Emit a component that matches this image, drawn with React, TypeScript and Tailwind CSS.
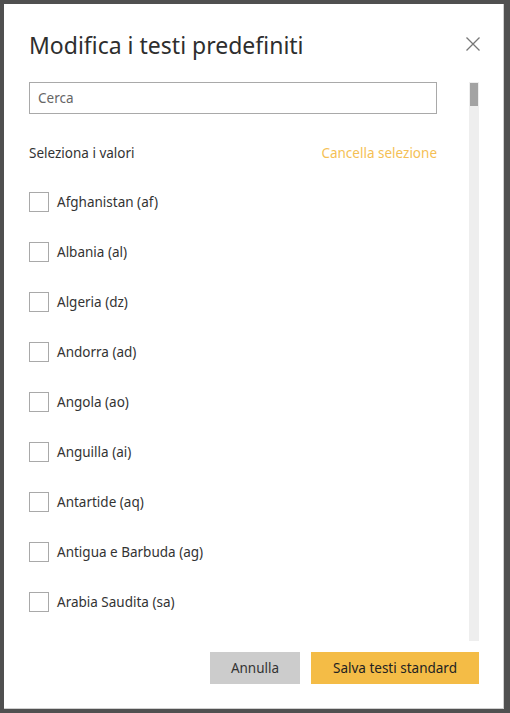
import { useState } from 'react';

const countries = [
  'Afghanistan (af)',
  'Albania (al)',
  'Algeria (dz)',
  'Andorra (ad)',
  'Angola (ao)',
  'Anguilla (ai)',
  'Antartide (aq)',
  'Antigua e Barbuda (ag)',
  'Arabia Saudita (sa)',
];

const CloseIcon = () => (
  <svg width="16" height="16" viewBox="0 0 16 16" fill="none" stroke="#777" strokeWidth="1.3">
    <path d="M1.5 1.5 L14.5 14.5 M14.5 1.5 L1.5 14.5" />
  </svg>
);

export default function App() {
  const [selected, setSelected] = useState<string[]>([]);

  const toggle = (c: string) =>
    setSelected((s) => (s.includes(c) ? s.filter((x) => x !== c) : [...s, c]));

  return (
    <div
      className="w-[510px] h-[713px] bg-[#505050] pl-[4px] pt-[4px] overflow-hidden"
      style={{ fontFamily: '"Noto Sans", "Open Sans", sans-serif' }}
    >
      <div className="w-[500px] h-[705px] bg-white border-r border-b border-[#cfcfcf] flex flex-col pl-[25px] pr-[24px]">
        <div className="flex items-center justify-between pt-[25px] h-[57px]">
          <h1 className="text-[23px] leading-[32px] text-[#2e2e2e]">Modifica i testi predefiniti</h1>
          <button className="mr-[-2px] mt-[-2px]">
            <CloseIcon />
          </button>
        </div>

        <div className="flex mt-[21px] h-[559px] gap-[32px]">
          <div className="w-[408px] overflow-hidden">
            <input
              placeholder="Cerca"
              className="w-full h-[32px] border border-[#a9a9a9] px-[8px] text-[13.5px] text-[#333] placeholder:text-[#666] outline-none"
            />
            <div className="flex items-center justify-between mt-[29px] h-[20px] text-[13.5px]">
              <span className="text-[#333]">Seleziona i valori</span>
              <button className="text-[#f5bf55]" onClick={() => setSelected([])}>
                Cancella selezione
              </button>
            </div>
            <div className="flex flex-col gap-[30px] mt-[29px]">
              {countries.map((c) => (
                <label key={c} className="flex items-center gap-[8px] h-[20px] text-[13.5px] text-[#333]">
                  <span
                    onClick={() => toggle(c)}
                    className="w-[20px] h-[20px] border border-[#a9a9a9] bg-white flex items-center justify-center shrink-0"
                  >
                    {selected.includes(c) && (
                      <svg width="12" height="12" viewBox="0 0 12 12" fill="none" stroke="#333" strokeWidth="1.6">
                        <path d="M2 6.5 L5 9 L10 3" />
                      </svg>
                    )}
                  </span>
                  {c}
                </label>
              ))}
            </div>
          </div>
          <div className="w-[10px] bg-[#eeeeee] pt-[1px] px-[1px]">
            <div className="h-[23px] bg-[#a3a3a3]" />
          </div>
        </div>

        <div className="flex justify-end gap-[11px] mt-[11px]">
          <button className="w-[90px] h-[32px] bg-[#cccccc] text-[13.5px] text-[#333]">Annulla</button>
          <button className="w-[168px] h-[32px] bg-[#f4bc46] text-[13.5px] text-[#222]">Salva testi standard</button>
        </div>
      </div>
    </div>
  );
}
